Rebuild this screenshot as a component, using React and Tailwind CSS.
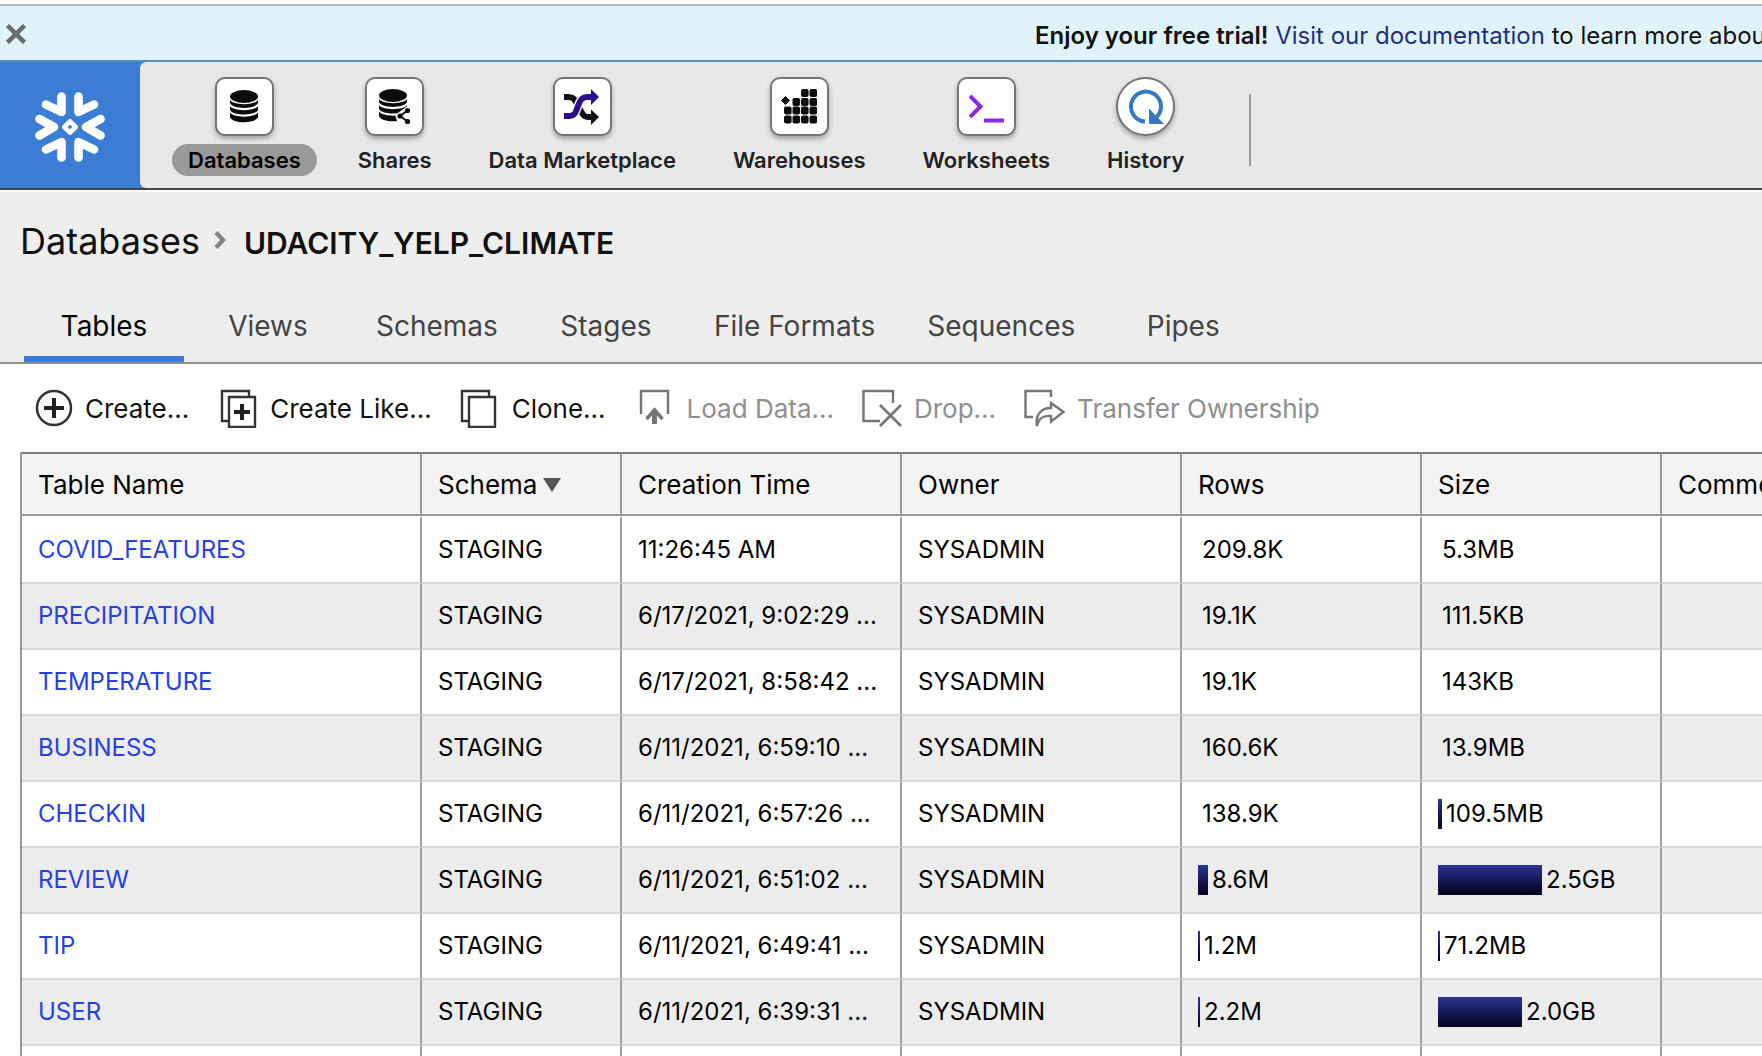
import React from "react";

const NAV = [
  { label: "Databases", icon: DatabaseIcon, active: true },
  { label: "Shares", icon: SharesIcon },
  { label: "Data Marketplace", icon: MarketplaceIcon },
  { label: "Warehouses", icon: WarehousesIcon },
  { label: "Worksheets", icon: WorksheetsIcon },
  { label: "History", icon: HistoryIcon, round: true },
];

const TABS = ["Tables", "Views", "Schemas", "Stages", "File Formats", "Sequences", "Pipes"];

const ACTIONS = [
  { label: "Create...", icon: CreateIcon },
  { label: "Create Like...", icon: CreateLikeIcon },
  { label: "Clone...", icon: CloneIcon },
  { label: "Load Data...", icon: LoadIcon, disabled: true },
  { label: "Drop...", icon: DropIcon, disabled: true },
  { label: "Transfer Ownership", icon: TransferIcon, disabled: true },
];

const ROWS = [
  { name: "COVID_FEATURES", time: "11:26:45 AM", rows: "209.8K", rowsBar: 0, size: "5.3MB", sizeBar: 0 },
  { name: "PRECIPITATION", time: "6/17/2021, 9:02:29 ...", rows: "19.1K", rowsBar: 0, size: "111.5KB", sizeBar: 0 },
  { name: "TEMPERATURE", time: "6/17/2021, 8:58:42 ...", rows: "19.1K", rowsBar: 0, size: "143KB", sizeBar: 0 },
  { name: "BUSINESS", time: "6/11/2021, 6:59:10 ...", rows: "160.6K", rowsBar: 0, size: "13.9MB", sizeBar: 0 },
  { name: "CHECKIN", time: "6/11/2021, 6:57:26 ...", rows: "138.9K", rowsBar: 0, size: "109.5MB", sizeBar: 4 },
  { name: "REVIEW", time: "6/11/2021, 6:51:02 ...", rows: "8.6M", rowsBar: 10, size: "2.5GB", sizeBar: 104 },
  { name: "TIP", time: "6/11/2021, 6:49:41 ...", rows: "1.2M", rowsBar: 2, size: "71.2MB", sizeBar: 2 },
  { name: "USER", time: "6/11/2021, 6:39:31 ...", rows: "2.2M", rowsBar: 2, size: "2.0GB", sizeBar: 84 },
];

function Logo() {
  return (
    <svg width="72" height="72" viewBox="0 0 72 72" fill="none" stroke="#fff" strokeWidth="8.6" strokeLinecap="round" strokeLinejoin="round" aria-label="Snowflake">
      <path d="M27.5 5.5V21L12 13.5M44.5 5.5V21L60 13.5M27.5 66.5V51L12 58.5M44.5 66.5V51L60 58.5M5.5 28L20 36L5.5 44.5M66.5 28L52 36L66.5 44.5" />
      <path d="M36 30.3L41.7 36L36 41.7L30.3 36Z" strokeWidth="4.6" />
    </svg>
  );
}

function Stack() {
  return (
    <>
      <ellipse cx="14" cy="6.5" rx="14" ry="6.5" />
      <path d="M0 10C3 15.5 25 15.5 28 10V13C25 19.5 3 19.5 0 13Z" />
      <path d="M0 16C3 21.5 25 21.5 28 16V20C25 26 3 26 0 20Z" />
      <path d="M0 22.5C3 28 25 28 28 22.5V27C26 34 2 34 0 27Z" />
    </>
  );
}

function DatabaseIcon() {
  return (
    <svg width="28" height="33" viewBox="0 0 28 33" fill="#0c0c0c" aria-hidden="true">
      <Stack />
    </svg>
  );
}

function SharesIcon() {
  return (
    <svg width="32" height="36" viewBox="0 0 32 36" fill="#0c0c0c" aria-hidden="true">
      <Stack />
      <path d="M19 27L28.5 20L34 20V36H22Z" fill="#fff" stroke="#fff" strokeWidth="5" strokeLinejoin="round" />
      <path d="M28.5 21.5L21 27L28.5 32.5" fill="none" stroke="#0c0c0c" strokeWidth="1.8" />
      <circle cx="28.5" cy="21.5" r="2.6" />
      <circle cx="21" cy="27" r="2.6" />
      <circle cx="28.5" cy="32.5" r="2.6" />
    </svg>
  );
}

function MarketplaceIcon() {
  return (
    <svg width="36" height="36" viewBox="0 0 36 36" fill="none" aria-hidden="true">
      <path d="M0 8H4C10 8 11 11 14 17L18 24C19.5 27 21 28 24 28H28" stroke="#111" strokeWidth="6" />
      <path d="M27 20.5L35 28L27 36Z" fill="#111" />
      <path d="M0 27H5C11 27 12 23 14 17C16 11 18 8 24 8H27" stroke="#fff" strokeWidth="8.5" />
      <path d="M0 27H5C11 27 12 23 14 17C16 11 18 8 24 8H28" stroke="#2b0f8e" strokeWidth="6" />
      <path d="M27 0L35 8L27 16Z" fill="#2b0f8e" />
    </svg>
  );
}

const CELLS = [
  [20, 0], [28.5, 0],
  [11.5, 9], [20, 9], [28.5, 9],
  [3, 17.5], [11.5, 17.5], [20, 17.5], [28.5, 17.5],
  [3, 26.5], [11.5, 26.5], [20, 26.5], [28.5, 26.5],
];

function WarehousesIcon() {
  return (
    <svg width="36" height="36" viewBox="0 0 36 36" fill="#0c0c0c" aria-hidden="true">
      {CELLS.map(([x, y]) => (
        <rect key={x + "-" + y} x={x} y={y} width="7.6" height="8" rx="2" />
      ))}
      <path d="M4.5 7.5L8.5 11.5L4.5 15.5L0.5 11.5Z" stroke="#0c0c0c" strokeLinejoin="round" />
    </svg>
  );
}

function WorksheetsIcon() {
  return (
    <svg width="36" height="36" viewBox="0 0 36 36" fill="none" stroke="#8a2be2" strokeWidth="4" aria-hidden="true">
      <path d="M2 7L12.5 17.5L2 28" />
      <path d="M16 31.5H36" />
    </svg>
  );
}

function HistoryIcon() {
  return (
    <svg width="36" height="36" viewBox="0 0 36 36" fill="none" aria-hidden="true">
      <path d="M17 32.5A15 15 0 1 1 28.6 28.1" stroke="#3179c2" strokeWidth="4" />
      <path d="M21 19.5V35H36Z" fill="#3179c2" />
    </svg>
  );
}

function CreateIcon() {
  return (
    <svg width="38" height="40" viewBox="0 0 38 40" fill="none" stroke="#333" aria-hidden="true">
      <circle cx="19" cy="20" r="17" strokeWidth="2.5" />
      <path d="M19 10V30M9 20H29" stroke="#222" strokeWidth="4" />
    </svg>
  );
}

function CreateLikeIcon() {
  return (
    <svg width="41" height="40" viewBox="0 0 41 40" fill="none" stroke="#333" strokeWidth="2.4" aria-hidden="true">
      <path d="M11 33H5V3H32V9" />
      <path d="M12 9H38V39H12Z" />
      <path d="M25 16V32M17 24H33" stroke="#222" strokeWidth="4" />
    </svg>
  );
}

function CloneIcon() {
  return (
    <svg width="40" height="40" viewBox="0 0 40 40" fill="none" stroke="#333" strokeWidth="2.4" aria-hidden="true">
      <path d="M8 33H2V3H29V9" />
      <path d="M9 9H35V39H9Z" />
    </svg>
  );
}

function LoadIcon() {
  return (
    <svg width="41" height="40" viewBox="0 0 41 40" fill="none" stroke="#757575" strokeWidth="2.4" aria-hidden="true">
      <path d="M7 26V3H34V26" />
      <path d="M20.5 36V23" strokeWidth="5" />
      <path d="M12.5 31L20.5 22L28.5 31" strokeWidth="3.5" />
    </svg>
  );
}

function DropIcon() {
  return (
    <svg width="40" height="40" viewBox="0 0 40 40" fill="none" stroke="#757575" strokeWidth="2.4" aria-hidden="true">
      <path d="M18 33H1.5V3H31V15" />
      <path d="M18 17L39 38M39 17L18 38" strokeWidth="2.6" />
    </svg>
  );
}

function TransferIcon() {
  return (
    <svg width="41" height="40" viewBox="0 0 41 40" fill="none" stroke="#757575" strokeWidth="2.4" aria-hidden="true">
      <path d="M9 29H1.5V3H27V9" />
      <path d="M27 15L39.5 24L27 33.5V28C19 27 15 30 13 38C11 27 17 20 27 20Z" />
    </svg>
  );
}

function Metric({ bar, children }) {
  return (
    <div className="flex items-center gap-1">
      <span className="h-[30px] shrink-0 bg-linear-to-b from-[#2b3596] to-[#04041c]" style={{ width: bar }} />
      <span>{children}</span>
    </div>
  );
}

export default function App() {
  return (
    <div className="flex h-screen flex-col overflow-hidden bg-white pt-1 font-['Inter','Liberation_Sans',sans-serif] text-black">
      <div className="flex h-[58px] shrink-0 items-center justify-between overflow-hidden border-y-2 border-t-[#b0b3c1] border-b-[#5191bf] bg-[#e0f2fa]">
        <button type="button" aria-label="Close" className="ml-[6px] shrink-0 pt-[2px]">
          <svg width="20" height="20" viewBox="0 0 20 20" stroke="#6b6b6b" strokeWidth="4.5" aria-hidden="true">
            <path d="M1.5 1.5L18.5 18.5M18.5 1.5L1.5 18.5" />
          </svg>
        </button>
        <p className="w-[727px] shrink-0 pt-[5px] text-2xl whitespace-nowrap text-[#111]">
          <strong className="font-semibold">Enjoy your free trial!</strong>{" "}
          <a href="#docs" className="text-[#1d2f7c]">Visit our documentation</a> to learn more about
        </p>
      </div>

      <header className="flex h-32 shrink-0 border-b-2 border-[#444] bg-[#3b7cd4]">
        <a href="#home" className="flex w-[140px] shrink-0 items-center justify-center pt-1">
          <Logo />
        </a>
        <nav className="flex flex-1 items-start gap-[25px] rounded-l-md bg-[#e8e8e8] pt-[15px] pl-8">
          {NAV.map(({ label, icon: Icon, active, round }) => (
            <button key={label} type="button" className="flex shrink-0 flex-col items-center gap-2">
              <span
                className={
                  "flex size-[59px] items-center justify-center border-2 border-[#757575] bg-white shadow-[0_3px_5px_rgba(0,0,0,0.3)] " +
                  (round ? "rounded-full" : "rounded-[10px]")
                }
              >
                <Icon />
              </span>
              <span
                className={
                  "rounded-full px-4 text-[22px] leading-8 font-semibold whitespace-nowrap " +
                  (active ? "bg-[#999] text-black" : "text-[#222]")
                }
              >
                {label}
              </span>
            </button>
          ))}
          <span className="mt-[17px] ml-6 h-[72px] w-[2px] bg-[#999]" />
        </nav>
      </header>

      <section className="mt-[2px] shrink-0 border-b-2 border-[#909090] bg-[#eee]">
        <h1 className="flex h-[98px] items-center pl-5 text-[#111]">
          <a href="#databases" className="text-4xl">Databases</a>
          <svg width="12" height="18" viewBox="0 0 12 18" fill="none" stroke="#858585" strokeWidth="4.5" className="mr-[18px] mb-[3px] ml-[14px]" aria-hidden="true">
            <path d="M2 1.5L9 9L2 16.5" />
          </svg>
          <span className="pt-[5px] text-[30px] font-semibold">UDACITY_YELP_CLIMATE</span>
        </h1>
        <div role="tablist" className="flex gap-1 pl-6">
          {TABS.map((tab, i) => (
            <button
              key={tab}
              type="button"
              role="tab"
              aria-selected={i === 0}
              className={
                "h-[72px] min-w-40 border-b-[6px] px-6 pt-[6px] text-[28px] whitespace-nowrap " +
                (i === 0 ? "border-[#3a7bdb] text-black" : "border-transparent text-[#444]")
              }
            >
              {tab}
            </button>
          ))}
        </div>
      </section>

      <div role="toolbar" className="flex h-[88px] shrink-0 items-center gap-7 pl-[35px]">
        {ACTIONS.map(({ label, icon: Icon, disabled }) => (
          <button
            key={label}
            type="button"
            disabled={disabled}
            className="flex shrink-0 items-center gap-3 text-[26px] whitespace-nowrap text-[#111] disabled:text-[#8e8e8e]"
          >
            <Icon />
            {label}
          </button>
        ))}
      </div>

      <table className="ml-5 w-[1920px] shrink-0 table-fixed border-separate border-spacing-0 border-l-2 border-[#999] text-left text-2xl whitespace-nowrap">
        <colgroup>
          <col className="w-[400px]" />
          <col className="w-[200px]" />
          <col className="w-[280px]" />
          <col className="w-[280px]" />
          <col className="w-[240px]" />
          <col className="w-[240px]" />
          <col />
        </colgroup>
        <thead>
          <tr className="h-16 bg-[#f3f3f3] text-[26px] *:border-y-2 *:border-r-2 *:border-t-[#7a7a7a] *:border-r-[#999] *:border-b-[#999] *:px-4 *:pt-[2px] *:font-normal">
            <th>Table Name</th>
            <th>
              <span className="flex items-center gap-[6px]">
                Schema
                <svg width="18" height="14" viewBox="0 0 18 14" fill="#555" aria-hidden="true">
                  <path d="M0 0H18L9 14Z" />
                </svg>
              </span>
            </th>
            <th>Creation Time</th>
            <th>Owner</th>
            <th>Rows</th>
            <th>Size</th>
            <th>Comment</th>
          </tr>
        </thead>
        <tbody>
          {ROWS.map((row) => (
            <tr
              key={row.name}
              className="h-[66px] first:h-[68px] even:bg-[#ececec] *:border-r-2 *:border-b-2 *:border-r-[#a0a0a0] *:border-b-[#d8d8d8] *:px-4 first:*:border-t-2 first:*:border-t-white"
            >
              <td>
                <a href={"#" + row.name} className="text-[#2541e3]">{row.name}</a>
              </td>
              <td>STAGING</td>
              <td>{row.time}</td>
              <td>SYSADMIN</td>
              <td><Metric bar={row.rowsBar}>{row.rows}</Metric></td>
              <td><Metric bar={row.sizeBar}>{row.size}</Metric></td>
              <td />
            </tr>
          ))}
          <tr className="h-[66px] *:border-r-2 *:border-[#a0a0a0]">
            <td /><td /><td /><td /><td /><td /><td />
          </tr>
        </tbody>
      </table>
    </div>
  );
}
